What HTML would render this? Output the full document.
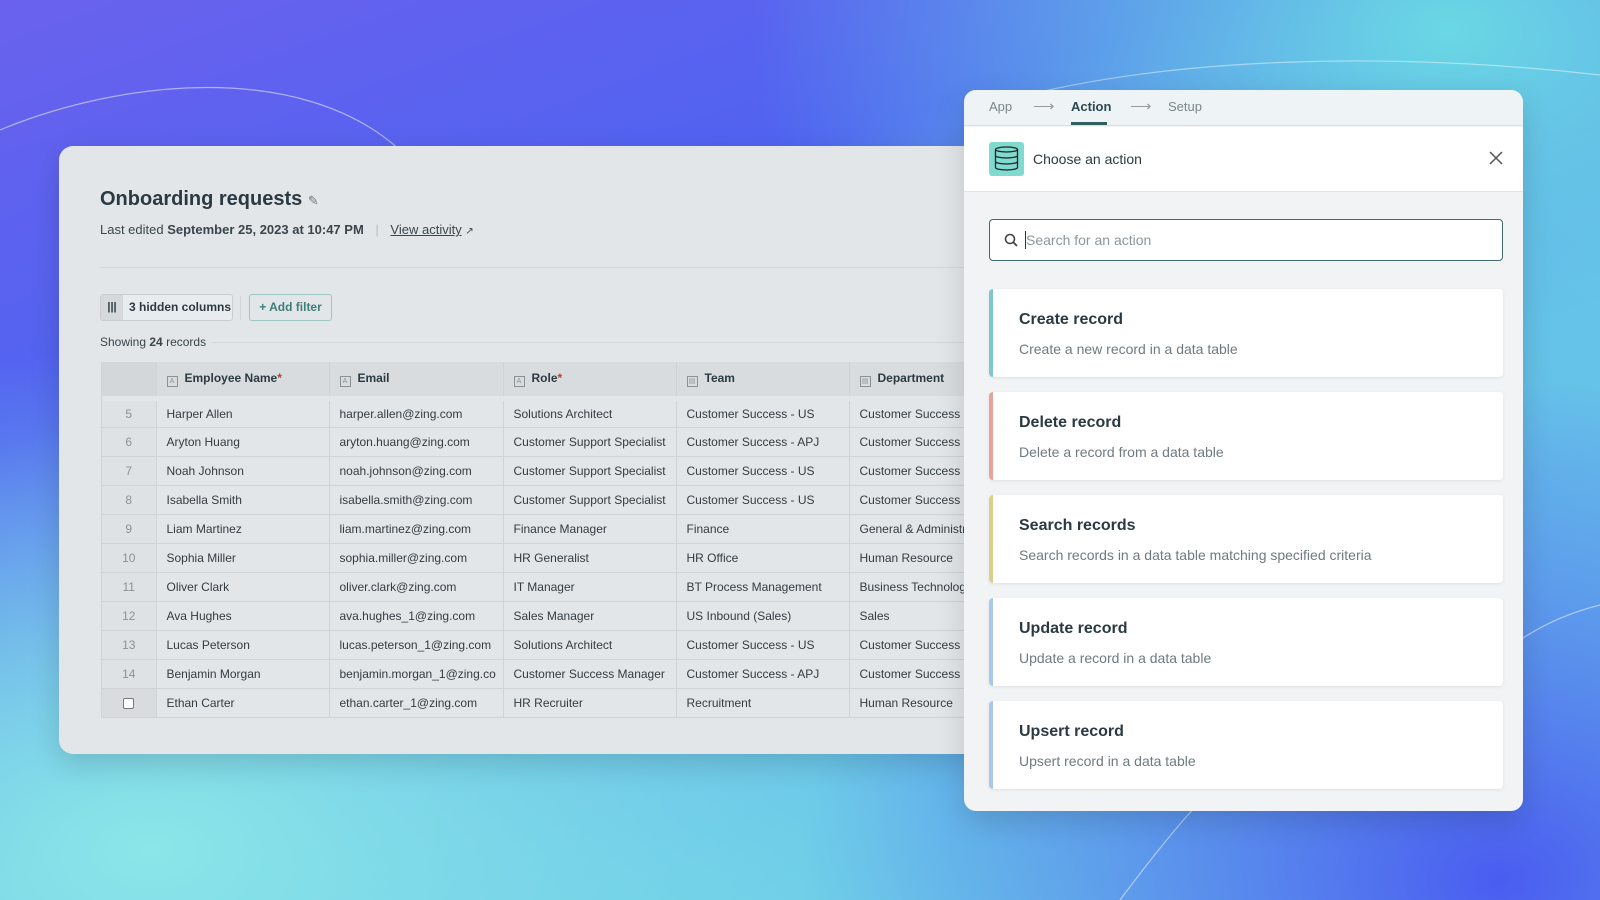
<!DOCTYPE html>
<html><head><meta charset="utf-8"><style>
*{box-sizing:border-box;margin:0;padding:0}
body{width:1600px;height:900px;overflow:hidden;position:relative;font-family:"Liberation Sans",sans-serif;
background:
radial-gradient(ellipse 700px 500px at 1500px 880px,#4a5cf0 0%,rgba(74,92,240,0) 100%),
radial-gradient(ellipse 800px 500px at 150px 850px,#8ae6e8 0%,rgba(138,230,232,0) 100%),
radial-gradient(ellipse 700px 450px at 1450px 30px,#6ad8e4 0%,rgba(106,216,228,0) 100%),
linear-gradient(160deg,#6a62ee 0%,#4f63f0 30%,#62b8ea 60%,#74dfe6 100%);}
.abs{position:absolute}
.card{left:59px;top:146px;width:920px;height:608px;background:#e3e6e9;border-radius:14px;box-shadow:0 10px 30px rgba(0,0,0,.15)}
.panel{left:964px;top:90px;width:559px;height:721px;background:#f1f3f5;border-radius:12px;overflow:hidden;box-shadow:0 10px 30px rgba(0,0,0,.15)}
.t{color:#2b3a42}
table{border-collapse:collapse;font-size:12px;color:#333c42}
td,th{height:29px;border-bottom:1px solid #cfd3d6;border-right:1px solid #cfd3d6;padding-left:10px;text-align:left;white-space:nowrap;overflow:hidden;vertical-align:middle}
th{height:36px;background:#d8dcdf;font-weight:bold;color:#2b3a42}
td.n{color:#8a9297;text-align:center;padding:0;background:#dfe2e5}
.ic{display:inline-block;width:11px;height:11px;border:1px solid #8a9297;font-size:7px;line-height:9px;text-align:center;color:#8a9297;margin-right:7px;vertical-align:-1px;font-weight:normal}
.opt{position:absolute;left:25px;width:514px;height:88px;background:#fff;border-radius:4px;box-shadow:0 1px 3px rgba(0,0,0,.08);overflow:hidden}
.opt:before{content:"";position:absolute;left:0;top:0;bottom:0;width:4px;background:var(--c)}
.opt b{position:absolute;left:30px;top:22px;font-size:16px;color:#2b3a42}
.opt span{position:absolute;left:30px;top:52px;font-size:14px;color:#6f7a80}
</style></head><body>
<svg class="abs" style="left:0;top:0" width="1600" height="900">
<path d="M0 130 C120 80 300 60 400 150" stroke="rgba(255,255,255,.5)" fill="none" stroke-width="1.2"/>
<path d="M1040 92 C1180 60 1380 50 1600 75" stroke="rgba(255,255,255,.45)" fill="none" stroke-width="1.2"/>
<path d="M1120 900 C1180 820 1230 760 1300 720" stroke="rgba(255,255,255,.5)" fill="none" stroke-width="1.2"/>
<path d="M1520 640 C1550 620 1580 610 1600 605" stroke="rgba(255,255,255,.5)" fill="none" stroke-width="1.2"/>
</svg>
<div class="abs card">
<div class="abs t" style="left:41px;top:42px;font-size:20px;font-weight:bold">Onboarding requests <span style="font-size:13px;color:#6f7a80;font-weight:normal">✎</span></div>
<div class="abs" style="left:41px;top:76px;font-size:13px;color:#3a464c">Last edited <b>September 25, 2023 at 10:47 PM</b> <span style="color:#bbb;margin:0 8px">|</span> <u>View activity</u> <span style="font-size:10px">↗</span></div>
<div class="abs" style="left:41px;top:121px;width:880px;height:1px;background:#d3d7da"></div>
<div class="abs" style="left:41px;top:148px;width:133px;height:27px;border:1px solid #c9cdd0;border-radius:3px;background:#e9ecee;font-size:12px;font-weight:bold;color:#2b3a42;line-height:25px;padding-left:28px"><span class="abs" style="left:0;top:0;width:22px;height:25px;background:#d5d9dc;text-align:center;font-size:11px">|||</span>3 hidden columns</div>
<div class="abs" style="left:181px;top:150px;width:1px;height:24px;background:#cfd3d6"></div>
<div class="abs" style="left:190px;top:148px;width:83px;height:27px;border:1px solid #9cc7c4;border-radius:3px;font-size:12px;font-weight:bold;color:#3d7d7a;line-height:25px;text-align:center">+ Add filter</div>
<div class="abs" style="left:41px;top:189px;font-size:12px;color:#3a464c">Showing <b>24</b> records</div>
<div class="abs" style="left:153px;top:196px;width:770px;height:1px;background:#d3d7da"></div>
<div class="abs" style="left:42px;top:216px;width:878px;overflow:hidden;border-left:1px solid #cfd3d6">
<table style="width:900px;table-layout:fixed">
<colgroup><col style="width:54px"><col style="width:173px"><col style="width:174px"><col style="width:173px"><col style="width:173px"><col style="width:153px"></colgroup>
<tr style="border-bottom:5px solid #e3e6e9"><th style="background:#d3d7da"></th><th><span class="ic">A</span>Employee Name<span style="color:#c0392b">*</span></th><th><span class="ic">A</span>Email</th><th><span class="ic">A</span>Role<span style="color:#c0392b">*</span></th><th><span class="ic">▤</span>Team</th><th><span class="ic">▤</span>Department</th></tr>
<tr><td class="n">5</td><td>Harper Allen</td><td>harper.allen@zing.com</td><td>Solutions Architect</td><td>Customer Success - US</td><td>Customer Success</td></tr>
<tr><td class="n">6</td><td>Aryton Huang</td><td>aryton.huang@zing.com</td><td>Customer Support Specialist</td><td>Customer Success - APJ</td><td>Customer Success</td></tr>
<tr><td class="n">7</td><td>Noah Johnson</td><td>noah.johnson@zing.com</td><td>Customer Support Specialist</td><td>Customer Success - US</td><td>Customer Success</td></tr>
<tr><td class="n">8</td><td>Isabella Smith</td><td>isabella.smith@zing.com</td><td>Customer Support Specialist</td><td>Customer Success - US</td><td>Customer Success</td></tr>
<tr><td class="n">9</td><td>Liam Martinez</td><td>liam.martinez@zing.com</td><td>Finance Manager</td><td>Finance</td><td>General &amp; Administrative</td></tr>
<tr><td class="n">10</td><td>Sophia Miller</td><td>sophia.miller@zing.com</td><td>HR Generalist</td><td>HR Office</td><td>Human Resource</td></tr>
<tr><td class="n">11</td><td>Oliver Clark</td><td>oliver.clark@zing.com</td><td>IT Manager</td><td>BT Process Management</td><td>Business Technology</td></tr>
<tr><td class="n">12</td><td>Ava Hughes</td><td>ava.hughes_1@zing.com</td><td>Sales Manager</td><td>US Inbound (Sales)</td><td>Sales</td></tr>
<tr><td class="n">13</td><td>Lucas Peterson</td><td>lucas.peterson_1@zing.com</td><td>Solutions Architect</td><td>Customer Success - US</td><td>Customer Success</td></tr>
<tr><td class="n">14</td><td>Benjamin Morgan</td><td>benjamin.morgan_1@zing.co</td><td>Customer Success Manager</td><td>Customer Success - APJ</td><td>Customer Success</td></tr>
<tr><td class="n" style="background:#d8dcdf"><span style="display:inline-block;width:11px;height:11px;border:1px solid #777;border-radius:2px;background:#fff;vertical-align:middle"></span></td><td>Ethan Carter</td><td>ethan.carter_1@zing.com</td><td>HR Recruiter</td><td>Recruitment</td><td>Human Resource</td></tr>
</table></div>
</div>
<div class="abs panel">
<div class="abs" style="left:0;top:0;width:559px;height:36px;background:#eef4f6;border-bottom:1px solid #d9dfe2;font-size:13px;color:#7b858a">
<span class="abs" style="left:25px;top:9px">App</span>
<span class="abs" style="left:69px;top:7px;font-size:15px;color:#999">⟶</span>
<span class="abs" style="left:107px;top:9px;color:#2b4a50;font-weight:bold">Action</span>
<span class="abs" style="left:107px;top:32px;width:36px;height:3px;background:#2f5f62"></span>
<span class="abs" style="left:166px;top:7px;font-size:15px;color:#999">⟶</span>
<span class="abs" style="left:204px;top:9px">Setup</span></div>
<div class="abs" style="left:0;top:37px;width:559px;height:65px;background:#fff;border-bottom:1px solid #e1e5e8">
<div class="abs" style="left:25px;top:15px;width:35px;height:34px;background:#7fdbd0;border-radius:3px">
<svg width="35" height="34"><g fill="none" stroke="#222" stroke-width="1.3"><ellipse cx="17.5" cy="7.5" rx="11" ry="2.5"/><path d="M6.5 7.5v18c0 1.4 5 2.5 11 2.5s11-1.1 11-2.5v-18M6.5 13.5c0 1.4 5 2.5 11 2.5s11-1.1 11-2.5M6.5 19.5c0 1.4 5 2.5 11 2.5s11-1.1 11-2.5"/></g></svg></div>
<div class="abs t" style="left:69px;top:24px;font-size:14px">Choose an action</div>
<div class="abs" style="left:525px;top:24px;width:14px;height:14px"><svg width="14" height="14"><path d="M1 1L13 13M13 1L1 13" stroke="#555" stroke-width="1.5"/></svg></div>
</div>
<div class="abs" style="left:25px;top:129px;width:514px;height:42px;background:#fff;border:1.5px solid #3f6b6d;border-radius:4px">
<svg class="abs" style="left:14px;top:13px" width="14" height="14"><circle cx="6" cy="6" r="4.5" fill="none" stroke="#444" stroke-width="1.6"/><path d="M9.3 9.3L13 13" stroke="#444" stroke-width="1.8"/></svg>
<span class="abs" style="left:35px;top:11px;width:1px;height:18px;background:#333"></span>
<span class="abs" style="left:36px;top:12px;font-size:14px;color:#8d969b">Search for an action</span></div>
<div class="opt" style="top:199px;--c:#7dc8cf"><b>Create record</b><span>Create a new record in a data table</span></div>
<div class="opt" style="top:302px;--c:#e9a396"><b>Delete record</b><span>Delete a record from a data table</span></div>
<div class="opt" style="top:405px;--c:#dbcf8e"><b>Search records</b><span>Search records in a data table matching specified criteria</span></div>
<div class="opt" style="top:508px;--c:#a9c9ea"><b>Update record</b><span>Update a record in a data table</span></div>
<div class="opt" style="top:611px;--c:#a9c9ea"><b>Upsert record</b><span>Upsert record in a data table</span></div>
</div>
</body></html>
